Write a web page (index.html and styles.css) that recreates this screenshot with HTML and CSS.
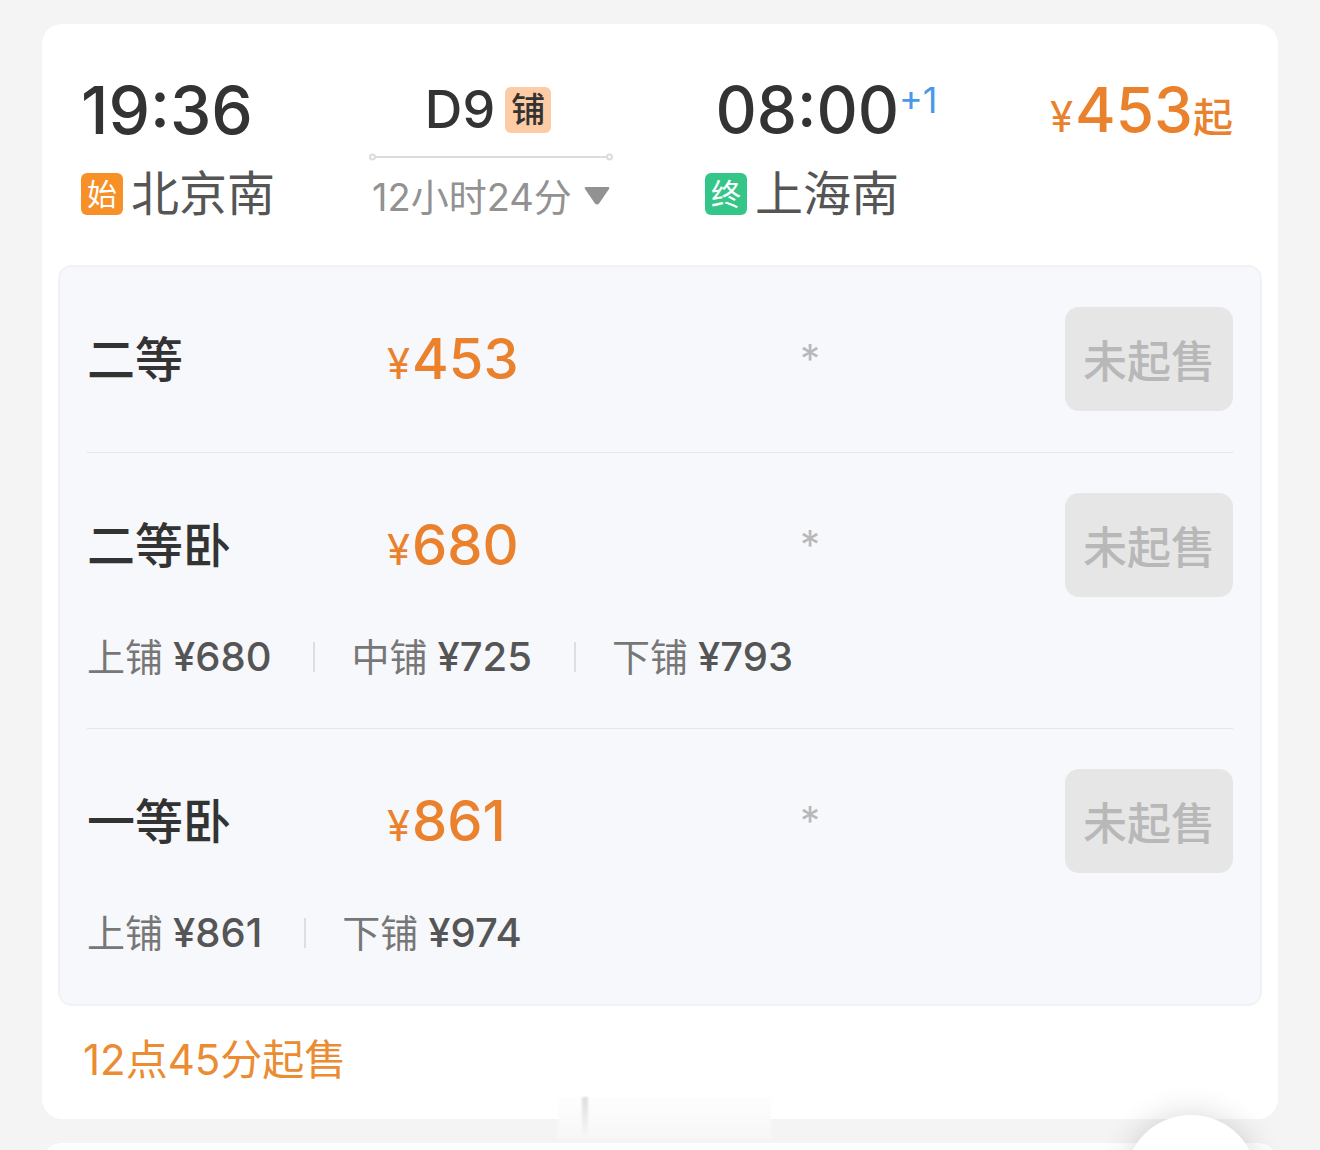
FILE: index.html
```html
<!DOCTYPE html>
<html lang="zh-CN">
<head>
<meta charset="utf-8">
<meta name="viewport" content="width=device-width, initial-scale=1">
<title>D9 北京南 - 上海南</title>
<link rel="stylesheet" href="styles.css">
</head>
<body>
<main class="page">
  <article class="card">
    <header class="trip">
      <div class="stop">
        <div class="time">19:36</div>
        <div class="station"><span class="badge badge-start">始</span>北京南</div>
      </div>
      <div class="train">
        <div class="number">D9<span class="berth-tag">铺</span></div>
        <svg class="track" viewBox="0 0 246 8" aria-hidden="true">
          <path d="M6 4H240"/><circle cx="3.5" cy="4" r="2.5"/><circle cx="242.5" cy="4" r="2.5"/>
        </svg>
        <button class="duration" type="button">12小时24分<svg class="caret" viewBox="0 0 26 18" aria-hidden="true"><path d="M2 0H24Q26 0 25 2L15 16.500Q13 18.500 11 16.500L1 2Q0 0 2 0Z"/></svg></button>
      </div>
      <div class="stop stop-end">
        <div class="time">08:00<span class="day">+1</span></div>
        <div class="station"><span class="badge badge-end">终</span>上海南</div>
      </div>
      <div class="from"><span class="yen">¥</span>453<span class="suffix">起</span></div>
    </header>

    <div class="panel">
      <table class="seats">
        <tbody>
          <tr class="seat">
            <th scope="row">二等</th>
            <td class="price"><span class="yen">¥</span>453</td>
            <td class="stock">*</td>
            <td class="action"><button class="buy" type="button" disabled>未起售</button></td>
          </tr>
        </tbody>
        <tbody>
          <tr class="seat">
            <th scope="row">二等卧</th>
            <td class="price"><span class="yen">¥</span>680</td>
            <td class="stock">*</td>
            <td class="action"><button class="buy" type="button" disabled>未起售</button></td>
          </tr>
          <tr>
            <td colspan="4">
              <ul class="berths">
                <li>上铺 <b>¥680</b></li>
                <li>中铺 <b>¥725</b></li>
                <li>下铺 <b>¥793</b></li>
              </ul>
            </td>
          </tr>
        </tbody>
        <tbody>
          <tr class="seat">
            <th scope="row">一等卧</th>
            <td class="price"><span class="yen">¥</span>861</td>
            <td class="stock">*</td>
            <td class="action"><button class="buy" type="button" disabled>未起售</button></td>
          </tr>
          <tr>
            <td colspan="4">
              <ul class="berths">
                <li>上铺 <b>¥861</b></li>
                <li>下铺 <b>¥974</b></li>
              </ul>
            </td>
          </tr>
        </tbody>
      </table>
    </div>
    <p class="notice">12点45分起售</p>
    <div class="smudge" aria-hidden="true"></div>
  </article>
  <article class="card next"></article>
</main>
<button class="fab" type="button" aria-label="更多"></button>
</body>
</html>
```
FILE: styles.css
```css
* { box-sizing: border-box; }

body {
  margin: 0;
  background: #f4f4f4;
  color: #333;
  font-family: Inter, "Noto Sans CJK SC", sans-serif;
}

button {
  margin: 0;
  padding: 0;
  border: 0;
  background: none;
  font: inherit;
}

.page {
  display: flex;
  flex-direction: column;
  gap: 24px;
  min-height: 100vh;
  padding: 24px 42px 0;
  overflow: hidden;
}

.card {
  position: relative;
  padding: 0 16px;
  border-radius: 20px;
  background: #fff;
}

/* The following result, only its top edge showing */
.next {
  flex: 1 0 40px;
  margin-bottom: -33px;
}

/* Departure, train, arrival and lowest price */
.trip {
  display: grid;
  grid-template-columns: 288px 336px auto 1fr;
  padding: 48px 29px 38px 23px;
}

.stop-end { text-align: right; }

.time {
  position: relative;
  font-size: 66px;
  font-weight: 500;
  line-height: 76px;
}

.stop-end .time { font-size: 64px; }

.day {
  position: absolute;
  top: 0;
  left: 100%;
  color: #4a98e8;
  font-size: 36px;
  font-weight: 400;
  line-height: 56px;
}

.station {
  display: flex;
  align-items: center;
  gap: 8px;
  margin-top: 16px;
  color: #555;
  font-size: 48px;
  line-height: 60px;
}

.badge {
  width: 42px;
  height: 42px;
  border-radius: 6px;
  color: #fff;
  font-size: 30px;
  line-height: 42px;
  text-align: center;
}

.badge-start { background: #f79027; }
.badge-end { background: #34c688; }

.train {
  display: flex;
  flex-direction: column;
  align-items: center;
  width: 244px;
}

.number {
  display: flex;
  align-items: center;
  gap: 10px;
  padding-right: 6px;
  font-size: 52px;
  font-weight: 500;
  line-height: 76px;
}

.berth-tag {
  width: 46px;
  height: 46px;
  border-radius: 6px;
  background: #fdcba4;
  font-size: 34px;
  line-height: 46px;
  text-align: center;
}

.track {
  width: 100%;
  height: 8px;
  margin-top: 5px;
  fill: none;
  stroke: #dcdcdc;
  stroke-width: 2;
}

.duration {
  display: flex;
  align-items: center;
  gap: 12px;
  margin-top: 6px;
  color: #929292;
  font-size: 38px;
  line-height: 60px;
  white-space: nowrap;
}

.caret {
  width: 26px;
  height: 18px;
  margin-bottom: 2px;
  fill: #929292;
}

.from {
  color: #ea812c;
  font-size: 62px;
  font-weight: 500;
  line-height: 76px;
  text-align: right;
  white-space: nowrap;
}

.suffix { font-size: 40px; }

.yen {
  margin-right: 2px;
  font-size: 42px;
  font-weight: 400;
  line-height: 1;
}

/* Seat classes */
.panel {
  padding: 0 27px;
  border: 2px solid #f1f2f6;
  border-radius: 14px;
  background: #f7f8fc;
}

.seats {
  width: 100%;
  border-collapse: collapse;
  table-layout: fixed;
}

.seats tbody + tbody { border-top: 1px solid #e6e6ea; }

.seats th,
.seats td { padding: 0; }

.seats .seat > * {
  height: 185px;
  padding-top: 40px;
  line-height: 104px;
  vertical-align: top;
}

.seats .seat:not(:last-child) > * { height: 144px; }

.seats .seat > th {
  width: 300px;
  padding-top: 42px;
  font-size: 48px;
  font-weight: 500;
  line-height: 102px;
  text-align: left;
}

.price {
  width: 300px;
  color: #ea812c;
  font-size: 56px;
  font-weight: 500;
}

.stock {
  width: 246px;
  color: #b8b8ba;
  font-size: 40px;
  text-align: center;
}

.action { text-align: right; }

.buy {
  display: inline-block;
  width: 168px;
  height: 104px;
  border-radius: 14px;
  background: #e6e6e6;
  color: #b8b8b8;
  font-size: 44px;
  font-weight: 500;
  line-height: normal;
  vertical-align: top;
}

.berths {
  display: flex;
  margin: 0;
  padding: 30px 0 41px;
  color: #777;
  font-size: 38px;
  line-height: 60px;
  list-style: none;
}

.berths li {
  display: flex;
  align-items: center;
  gap: 10px;
}

.berths li + li::before {
  content: "";
  width: 2px;
  height: 30px;
  margin: 0 26px 0 42px;
  background: #dddee2;
}

.berths b {
  color: #555;
  font-size: 40px;
  font-weight: 500;
}

.notice {
  margin: 0;
  padding: 22px 25px 27px;
  color: #eb8b32;
  font-size: 42px;
  line-height: 64px;
}

/* Faded mark over the card's lower edge */
.smudge {
  position: absolute;
  bottom: -20px;
  left: 516px;
  width: 213px;
  height: 42px;
  background:
    linear-gradient(#dedede, #f6f6f6) 24px 0 / 6px 38px no-repeat,
    linear-gradient(#fefefe, #f7f7f7);
  filter: blur(1px);
}

.fab {
  position: fixed;
  right: 63px;
  bottom: -97px;
  width: 132px;
  height: 132px;
  border-radius: 50%;
  background: #fff;
  box-shadow: 0 0 32px rgba(0, 0, 0, 0.16);
}
```
